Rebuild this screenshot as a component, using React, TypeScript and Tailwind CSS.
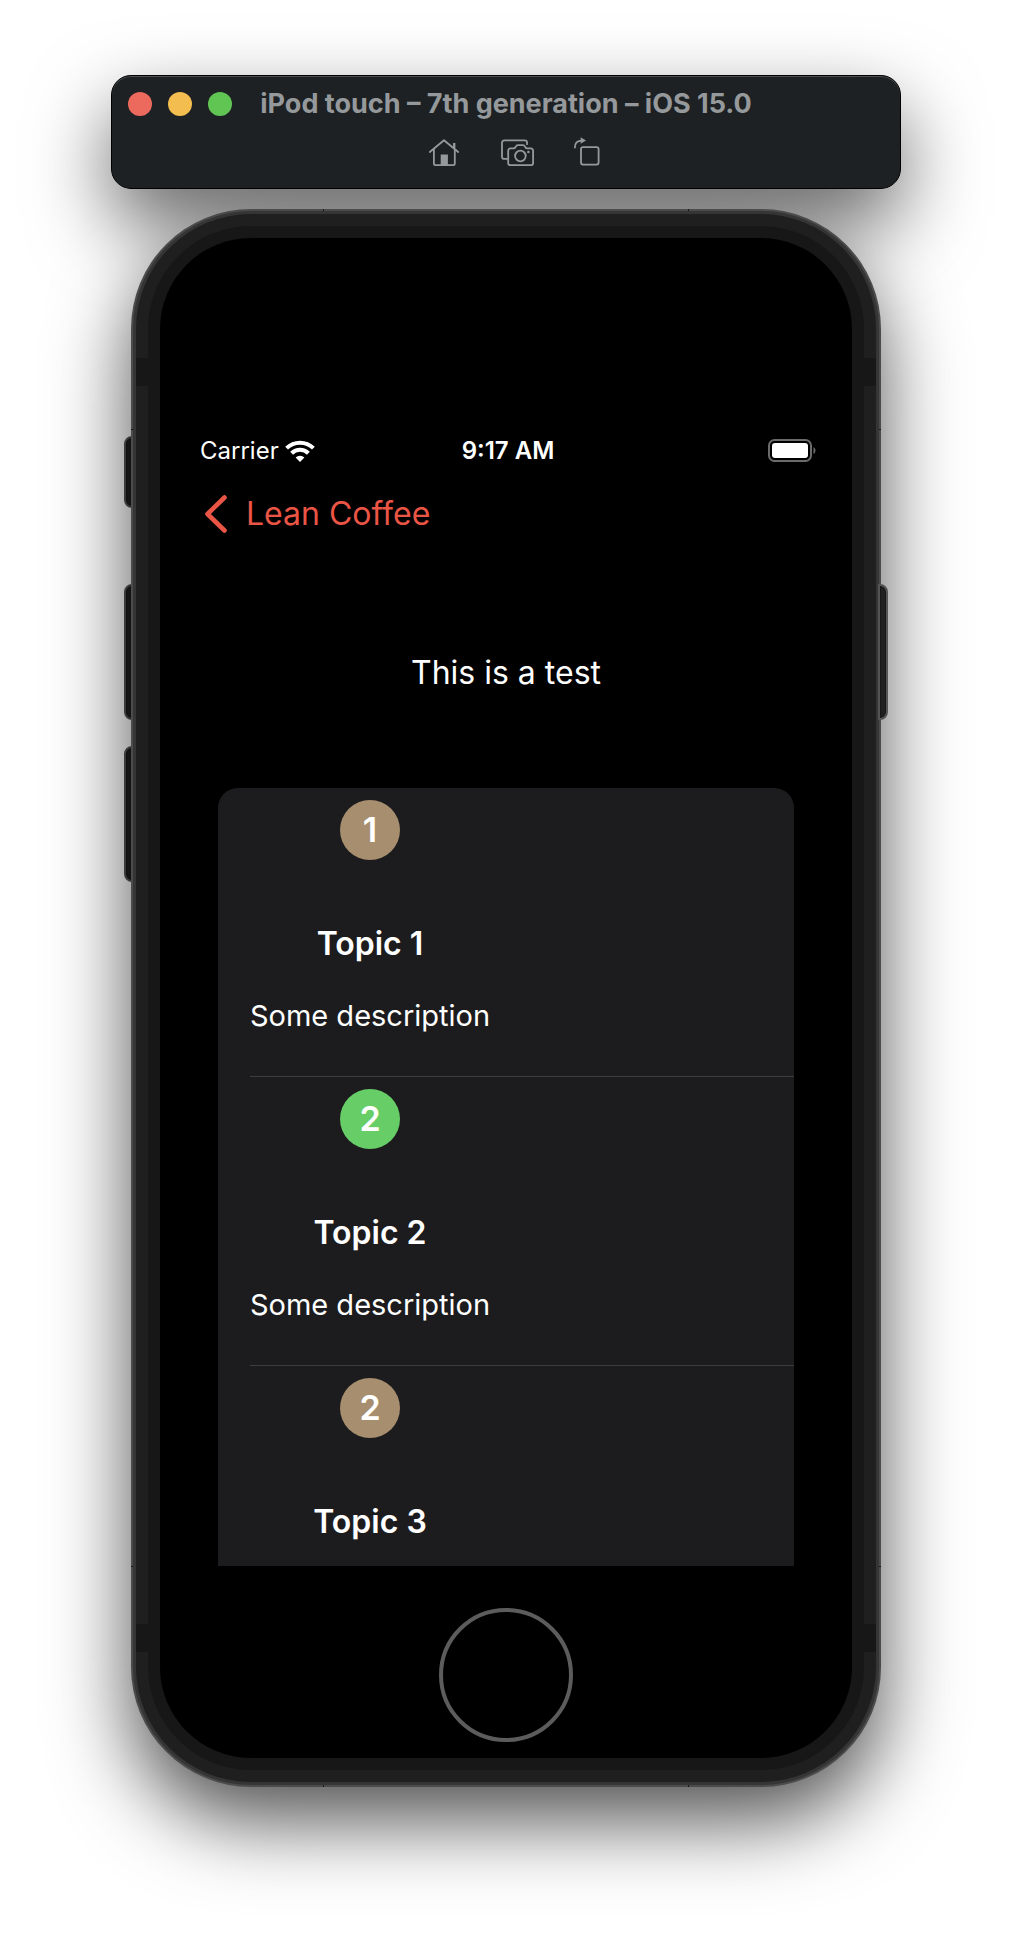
import React from "react";

type Topic = { votes: number; title: string; description?: string; tone: string };

const topics: Topic[] = [
  { votes: 1, title: "Topic 1", description: "Some description", tone: "bg-[#a78e6e]" },
  { votes: 2, title: "Topic 2", description: "Some description", tone: "bg-[#67ce67]" },
  { votes: 2, title: "Topic 3", tone: "bg-[#a78e6e]" },
];

function HomeIcon() {
  return (
    <svg width="32" height="32" viewBox="0 0 32 32" fill="none" stroke="currentColor" strokeWidth="1.8" strokeLinecap="round" strokeLinejoin="round" aria-hidden="true">
      <path d="M1.8 16 16 4.2 30.2 16" />
      <path d="M5.9 13.5V27.6a1.6 1.6 0 0 0 1.6 1.6H25.2a1.6 1.6 0 0 0 1.6-1.6V13.5" />
      <path d="M26.2 12V7" strokeWidth="2.4" strokeLinecap="butt" />
      <path d="M12.7 18.5h7.2v10.7h-7.2z" fill="currentColor" stroke="none" />
    </svg>
  );
}

function ScreenshotIcon() {
  return (
    <svg width="40" height="32" viewBox="-4 0 40 32" fill="none" stroke="currentColor" strokeWidth="1.8" strokeLinecap="round" strokeLinejoin="round" aria-hidden="true">
      <path d="M7 22.9H4.2A2.2 2.2 0 0 1 2 20.7V6.6a2.2 2.2 0 0 1 2.2-2.2H24.8A2.2 2.2 0 0 1 27 6.6v1.6" />
      <path d="M10.4 12.4h3.2c1.2 0 1.5-.6 2-1.5.6-1.2 1.2-1.8 2.3-1.8h5c1.1 0 1.7.6 2.3 1.8.5.9.8 1.5 2 1.5h3.7a2.2 2.2 0 0 1 2.2 2.2v12.3a2.2 2.2 0 0 1-2.2 2.2H10.4a2.2 2.2 0 0 1-2.2-2.2V14.6a2.2 2.2 0 0 1 2.2-2.2Z" />
      <circle cx="20.4" cy="20" r="5.3" />
      <circle cx="28.4" cy="16" r="1.3" fill="currentColor" stroke="none" />
    </svg>
  );
}

function RotateIcon() {
  return (
    <svg width="28" height="32" viewBox="0 0 28 32" fill="none" stroke="currentColor" strokeWidth="1.8" strokeLinejoin="round" aria-hidden="true">
      <rect x="9" y="11.2" width="17.6" height="17.4" rx="2" />
      <path d="M2.8 12.2C2.8 7 5.2 4.6 9.8 4.6" />
      <path d="M8.6 1.2 14 4.5 8.6 7.8z" fill="currentColor" stroke="none" />
    </svg>
  );
}

function SimulatorBar() {
  return (
    <div className="rounded-[20px] shadow-[0_34px_80px_rgba(0,0,0,0.6)]">
      <header className="relative z-10 rounded-[20px] border border-black bg-[#1d2124] px-4 pt-3 pb-5 text-[#96999b] shadow-[inset_0_1px_0_#4c5052]">
        <div className="grid grid-cols-[1fr_auto_1fr] items-center">
          <div className="flex gap-4">
            <button type="button" aria-label="Close" className="size-6 rounded-full bg-[#ec695e]" />
            <button type="button" aria-label="Minimize" className="size-6 rounded-full bg-[#f4bd50]" />
            <button type="button" aria-label="Zoom" className="size-6 rounded-full bg-[#61c554]" />
          </div>
          <h1 className="text-[27px] leading-8 font-bold whitespace-nowrap">iPod touch – 7th generation – iOS 15.0</h1>
        </div>
        <div className="mt-4 flex justify-center gap-9 pl-4">
          <button type="button" aria-label="Home"><HomeIcon /></button>
          <button type="button" aria-label="Screenshot"><ScreenshotIcon /></button>
          <button type="button" aria-label="Rotate"><RotateIcon /></button>
        </div>
      </header>
    </div>
  );
}

function StatusBar() {
  return (
    <div className="grid h-10 grid-cols-3 items-center pt-0.5 pr-2.5 pl-3.5 text-[24px] leading-8">
      <div className="flex items-center gap-1.5">
        <span>Carrier</span>
        <svg width="30" height="24" viewBox="0 0 30 24" fill="none" stroke="white" aria-label="Wi-Fi">
          <path d="M1.6 9.2A19 19 0 0 1 28.4 9.2" strokeWidth="4" />
          <path d="M6.6 14.2A12 12 0 0 1 23.4 14.2" strokeWidth="4" />
          <path d="M15 23 10.6 18.6A6.3 6.3 0 0 1 19.4 18.6Z" fill="white" stroke="none" />
        </svg>
      </div>
      <span className="text-center font-semibold">9:17 AM</span>
      <svg className="justify-self-end" width="48" height="24" viewBox="0 0 48 24" aria-label="Battery full">
        <rect x="1" y="1" width="42" height="21" rx="5.5" fill="none" stroke="#6b6b6b" strokeWidth="2" />
        <rect x="4" y="4" width="36" height="15" rx="3" fill="white" />
        <path d="M45.5 8v7q2-1 2-3.500t-2-3.500z" fill="#6b6b6b" />
      </svg>
    </div>
  );
}

function TopicRow({ topic }: { topic: Topic }) {
  return (
    <li className="ml-8 border-[#3d3d40] pt-3 not-last:border-b">
      <div className="flex w-60 flex-col items-center">
        <span className={`flex size-[60px] items-center justify-center rounded-full text-[34px] leading-10 font-semibold ${topic.tone}`}>
          {topic.votes}
        </span>
        <h3 className="mt-16 text-[32px] leading-10 font-semibold">{topic.title}</h3>
        {topic.description && <p className="mt-8 mb-10 text-[29px] leading-10 whitespace-nowrap">{topic.description}</p>}
      </div>
    </li>
  );
}

function Screen() {
  return (
    <main className="mx-[26px]">
      <StatusBar />
      <nav className="flex h-[88px] items-center pl-4">
        <a href="#lean-coffee" className="flex items-center gap-4 text-[32px] leading-10 text-[#ea5545]">
          <svg width="28" height="40" viewBox="0 0 28 40" fill="none" stroke="currentColor" strokeWidth="4.600" strokeLinecap="round" strokeLinejoin="round" aria-hidden="true">
            <path d="M22.500 3.500 5.500 20 22.500 36.500" />
          </svg>
          Lean Coffee
        </a>
      </nav>
      <h2 className="py-[95px] text-center text-[32px] leading-10">This is a test</h2>
      <ul className="mx-8 rounded-t-[20px] bg-[#1c1c1e] pb-6">
        {topics.map((topic) => (
          <TopicRow key={topic.title} topic={topic} />
        ))}
      </ul>
    </main>
  );
}

const sideButton = "border-2 border-[#555] bg-[#1f1f1f] shadow-[inset_0_0_0_1px_#161616]";

function AntennaBands() {
  return (
    <div className="flex justify-between">
      <span className="h-7 w-3 bg-[#171717]" />
      <span className="h-7 w-3 bg-[#171717]" />
    </div>
  );
}

function HorizontalSeams() {
  return (
    <div className="flex justify-between px-48">
      <span className="h-0.5 w-px bg-[#161616]" />
      <span className="h-0.5 w-px bg-[#161616]" />
    </div>
  );
}

function VerticalSeams() {
  return (
    <div className="flex justify-between">
      <span className="h-px w-0.5 bg-[#161616]" />
      <span className="h-px w-0.5 bg-[#161616]" />
    </div>
  );
}

function Phone() {
  return (
    <section aria-label="iPod touch" className="mx-[13px] mt-5 flex">
      <div className="-mr-1 flex w-[11px] flex-col pt-[227px]">
        <div className={`${sideButton} h-[72px] rounded-l-lg`} />
        <div className={`${sideButton} mt-19 h-[136px] rounded-l-lg`} />
        <div className={`${sideButton} mt-[26px] h-[136px] rounded-l-lg`} />
      </div>
      <div className="relative z-1 min-w-0 flex-1 rounded-[120px] bg-[#4b4b4b] p-0.5 shadow-[0_34px_80px_rgba(0,0,0,0.68)]">
        <div className="rounded-[118px] bg-[#353535] p-[3px]">
          <div className="rounded-[115px] bg-[#1f1f1f] p-3">
            <div className="rounded-[103px] bg-[#171717] p-3">
              <div className="rounded-[91px] bg-black pt-48 pb-4">
                <Screen />
                <button type="button" aria-label="Home button" className="mx-auto mt-[42px] block size-[134px] rounded-full border-4 border-[#5c5c5c]" />
              </div>
            </div>
          </div>
        </div>
        <div className="pointer-events-none absolute inset-0 flex flex-col justify-between px-[5px] pt-[149px] pb-[135px]">
          <AntennaBands />
          <AntennaBands />
        </div>
        <div className="pointer-events-none absolute inset-0 flex flex-col justify-between">
          <HorizontalSeams />
          <HorizontalSeams />
        </div>
        <div className="pointer-events-none absolute inset-0 flex flex-col justify-between py-[220px]">
          <VerticalSeams />
          <VerticalSeams />
        </div>
      </div>
      <div className="z-1 -ml-[3px] w-2.5 pt-[375px]">
        <div className={`${sideButton} h-[136px] rounded-r-lg`} />
      </div>
    </section>
  );
}

export default function App() {
  return (
    <div className="min-h-screen bg-white px-[111px] pt-[75px] pb-36 font-['Inter',sans-serif] text-white">
      <SimulatorBar />
      <Phone />
    </div>
  );
}
